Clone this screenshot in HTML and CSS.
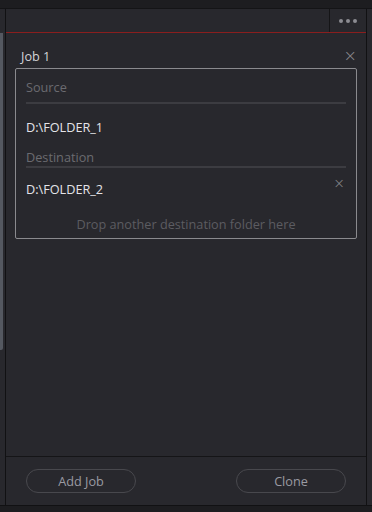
FILE: index.html
```html
<!DOCTYPE html>
<html lang="en">
<head>
    <meta charset="UTF-8">
    <title>Jobs</title>
<link rel="stylesheet" href="styles.css">
</head>
<body>
<div class="topStrip"></div>
<div class="frame">
    <div class="leftCol">
        <div class="leftHead"></div>
        <div class="leftBody"><div class="scrollbar"></div></div>
    </div>
    <div class="main">
        <div class="head">
            <div class="headTitle"></div>
            <div class="headMenu"><span></span><span></span><span></span></div>
        </div>
        <div class="content">
            <div class="jobTitle">
                <span>Job 1</span>
                <span class="close">&times;</span>
            </div>
            <div class="jobBox">
                <div class="label">Source</div>
                <div class="path">D:\FOLDER_1</div>
                <div class="label destLabel">Destination</div>
                <div class="path dest">
                    <span>D:\FOLDER_2</span>
                    <span class="close small">&times;</span>
                </div>
                <div class="drop">Drop another destination folder here</div>
            </div>
        </div>
        <div class="footer">
            <div class="btn">Add Job</div>
            <div class="btn">Clone</div>
        </div>
    </div>
    <div class="rightCol">
        <div class="rightHead"></div>
    </div>
</div>
<div class="bottomStrip"></div>
</body>
</html>
```

FILE: styles.css
```css
body{
    margin: 0;
    width: 372px;
    height: 512px;
    background-color: #1d1d20;
    font-family: "Open Sans", sans-serif;
    font-size: 12.7px;
    overflow: hidden;
}
.topStrip{
    height: 8px;
    background-color: #1d1d20;
    border-bottom: 1px solid #141416;
}
.frame{
    display: flex;
    height: 496px;
}
.leftCol{
    width: 5px;
    display: flex;
    flex-direction: column;
    border-right: 1px solid #111113;
}
.leftHead{
    height: 23px;
    background-color: #28282d;
    border-bottom: 1px solid #2a2a2f;
}
.leftBody{
    flex: 1;
    background-color: #28282d;
}
.scrollbar{
    width: 3px;
    height: 317px;
    background-color: #545860;
    border-bottom-right-radius: 2px;
}
.main{
    width: 360px;
    display: flex;
    flex-direction: column;
    background-color: #28282d;
    border-right: 1px solid #111113;
}
.head{
    height: 23px;
    display: flex;
    border-bottom: 1px solid #8a1e1e;
}
.headTitle{
    flex: 1;
    border-right: 1px solid #151517;
}
.headMenu{
    width: 36px;
    display: flex;
    justify-content: center;
    align-items: center;
    gap: 3px;
}
.headMenu span{
    width: 4px;
    height: 4px;
    border-radius: 50%;
    background-color: #8c8c92;
}
.content{
    flex: 1;
    padding: 13px 9px 0 9px;
    border-bottom: 1px solid #151517;
}
.jobTitle{
    display: flex;
    justify-content: space-between;
    align-items: center;
    color: #d4d4d8;
    padding: 0 0 0 6px;
    height: 20px;
}
.close{
    color: #8c8c90;
    font-size: 16px;
    line-height: 1;
    font-family: "DejaVu Sans", sans-serif;
    font-weight: 300;
}
.jobBox{
    margin-top: 2px;
    border: 1px solid #8a8a8e;
    border-radius: 2px;
    padding: 0 10px;
    box-sizing: border-box;
    height: 171px;
}
.label{
    color: #6b6b70;
    padding: 9px 0 6px 0;
    border-bottom: 2px solid #3c3c41;
}
.destLabel{
    padding: 0;
}
.path{
    color: #e4e4e8;
    padding: 14px 0 12px 0;
}
.dest{
    display: flex;
    justify-content: space-between;
    align-items: flex-start;
    padding: 12px 0 0 0;
}
.close.small{
    font-size: 14px;
    margin-top: -4px;
    margin-right: 1px;
}
.drop{
    text-align: center;
    color: #5c5c61;
    padding-top: 17px;
}
.footer{
    height: 48px;
    display: flex;
    justify-content: space-between;
    align-items: center;
    padding: 0 20px;
}
.btn{
    width: 108px;
    height: 22px;
    line-height: 22px;
    border: 1px solid #48484d;
    border-radius: 12px;
    text-align: center;
    color: #9a9aa2;
}
.rightCol{
    flex: 1;
    background-color: #28282d;
}
.rightHead{
    height: 23px;
    border-bottom: 1px solid #28282d;
}
.bottomStrip{
    height: 7px;
    background-color: #1d1d20;
    border-top: 1px solid #111113;
}
```
